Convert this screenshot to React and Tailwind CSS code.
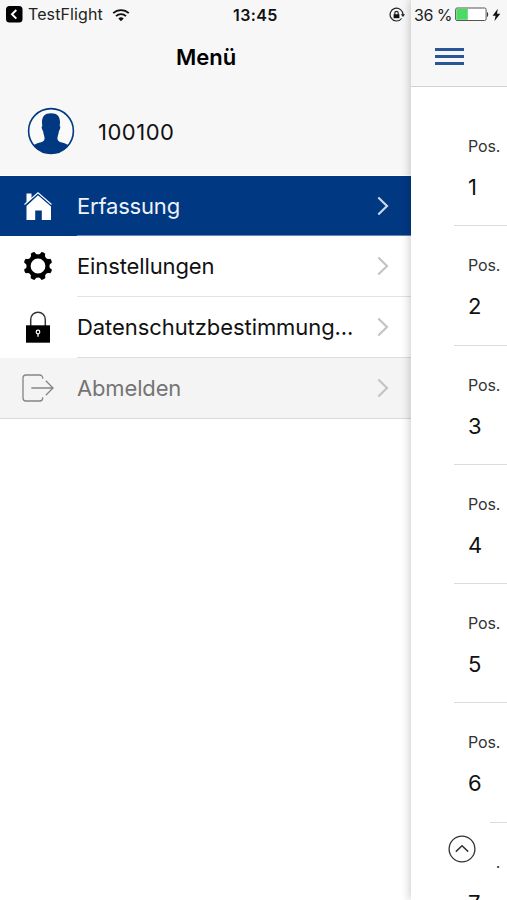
const MENU = [
  { id: "home", label: "Erfassung", Icon: HomeIcon, row: "h-[60px] bg-[#003882] text-[#eef2fa]", text: "pt-px tracking-[-0.2px]", chevron: "text-[#ccd6e6]", line: "border-[#6685b3]" },
  { id: "settings", label: "Einstellungen", Icon: GearIcon, row: "h-[61px] bg-white text-[#111]", text: "pt-px tracking-[-0.12px]", chevron: "text-[#c4c4c6]", line: "border-[#e2e2e2]" },
  { id: "privacy", label: "Datenschutzbestimmung...", Icon: LockIcon, row: "h-[61px] bg-white text-[#111]", text: "pt-px tracking-[-0.07px]", chevron: "text-[#c4c4c6]", line: "border-[#dcdcdc]" },
  { id: "logout", label: "Abmelden", Icon: LogoutIcon, row: "h-[61px] border-b border-[#d9d9d9] bg-[#f4f4f4] text-[#757575]", text: "pt-0.5 tracking-[-0.15px]", chevron: "text-[#c4c4c6]", line: "border-transparent" },
];

const POSITIONS = [1, 2, 3, 4, 5, 6, 7];

function HomeIcon() {
  return (
    <svg width="30" height="30" viewBox="0 0 30 30" fill="currentColor" className="text-white">
      <path d="M3.5 2.500h5v5L3.500 12z" />
      <path d="M15 4.200 28 15.500V29h-9.200v-9.500h-6.600V29H3.500V15z" />
      <path d="M2.200 14.300 15 3.300l12.800 11" fill="none" stroke="#003882" strokeWidth="1" />
      <path d="M1.500 13.500 15 1.800l13.500 11.700" fill="none" stroke="currentColor" strokeWidth="1.100" />
    </svg>
  );
}

function GearIcon() {
  const teeth = [22.5, 67.5, 112.5, 157.5, 202.5, 247.5, 292.5, 337.5];
  return (
    <svg width="30" height="30" viewBox="0 0 30 30" className="mb-px text-black">
      <circle cx="15" cy="15" r="9.400" fill="none" stroke="currentColor" strokeWidth="4" />
      {teeth.map((angle) => (
        <path key={angle} d="M10 5.500Q12.700 4 13 .8q2-.7 4 0Q17.300 4 20 5.500z" fill="currentColor" transform={`rotate(${angle} 15 15)`} />
      ))}
    </svg>
  );
}

function LockIcon() {
  return (
    <svg width="26" height="32" viewBox="0 0 26 32" className="mb-px text-black">
      <path d="M5.700 15V8.500a7.300 7.300 0 0 1 14.600 0V15" fill="none" stroke="#333" strokeWidth="1.500" />
      <path d="M1 14.300h24v17.400H1z" fill="currentColor" />
      <circle cx="13" cy="21" r="1.800" fill="none" stroke="#fff" strokeWidth="1.200" />
      <path d="M13 22.500v3.200" stroke="#fff" strokeWidth="1.300" />
    </svg>
  );
}

function LogoutIcon() {
  return (
    <svg width="32" height="28" viewBox="0 0 32 28" fill="none" stroke="#858585" strokeWidth="1.300">
      <path d="M20.700 4.800V4a3 3 0 0 0-3-3H4a3 3 0 0 0-3 3v20a3 3 0 0 0 3 3h13.700a3 3 0 0 0 3-3v-.8" />
      <path d="M9.300 14h21.500M23.800 6.800l7.200 7.200-7.200 7.200" />
    </svg>
  );
}

function AvatarIcon() {
  return (
    <svg width="48" height="48" viewBox="0 0 48 48">
      <clipPath id="avatar">
        <circle cx="24" cy="24" r="22.500" />
      </clipPath>
      <circle cx="24" cy="24" r="22.400" fill="#fafafa" stroke="#003882" strokeWidth="1.600" />
      <path
        clipPath="url(#avatar)"
        fill="#003882"
        d="M24 6.200c6.500 0 9.300 3.600 9 9.800l-.3 3c1 .4.800 2.800-.8 5.200-.4 3.200-1.400 5-1.500 7 .1 2.600 1.500 3.400 4.600 4.400 3.600 1.100 6.200 2 8.500 4.400v8h-39v-8c2.300-2.400 4.900-3.300 8.500-4.400 3.100-1 4.500-1.800 4.600-4.400-.1-2-1.100-3.800-1.500-7-1.600-2.400-1.800-4.800-.8-5.200l-.3-3c-.3-6.200 2.500-9.800 9-9.800z"
      />
    </svg>
  );
}

function Chevron({ className }) {
  return (
    <svg width="12" height="20" viewBox="0 0 12 20" fill="none" stroke="currentColor" strokeWidth="2.200" className={className}>
      <path d="m1.300 1.500 8.700 8.500-8.700 8.500" />
    </svg>
  );
}

function StatusLeft() {
  return (
    <div className="flex h-[29px] items-center pl-1.5 text-[#222]">
      <svg width="17" height="17" viewBox="0 0 17 17">
        <rect width="16.500" height="16.500" rx="3.500" fill="#000" />
        <path d="M10.300 4 6 8.300l4.300 4.300" fill="none" stroke="#fff" strokeWidth="2" />
      </svg>
      <span className="ml-[5px] w-[84px] pb-px whitespace-nowrap text-[16px] tracking-[0.1px]">TestFlight</span>
      <svg width="18" height="14" viewBox="0 0 18 14" fill="none" stroke="#111" strokeWidth="1.800">
        <path d="M1.200 5.200a11.200 11.200 0 0 1 15.600 0M4 8.200a7.200 7.200 0 0 1 10 0" />
        <path d="M6.300 10.600a4 4 0 0 1 5.400 0L9 13.300z" fill="#111" stroke="none" />
      </svg>
      <span className="ml-[103px] w-[46px] whitespace-nowrap text-[16px] font-semibold tracking-[0.4px] text-[#111]">13:45</span>
      <svg width="17" height="16" viewBox="0 0 17 16" className="ml-auto mr-[5px]" fill="none" stroke="#222" strokeWidth="1.200">
        <path d="M12.600 11.500A6.400 6.400 0 1 1 13.900 8" />
        <path d="M11.800 7.200h4.300L14 10z" fill="#222" stroke="none" />
        <path d="M4.600 7.200h5.800v4H4.600z" fill="#111" stroke="none" />
        <path d="M5.800 7.500V6a1.700 1.700 0 0 1 3.400 0v1.500" />
      </svg>
    </div>
  );
}

function StatusRight() {
  return (
    <div className="flex h-[29px] items-center pl-[3px] text-[#222]">
      <span className="w-[41px] whitespace-nowrap text-[16px] tracking-[-0.5px]">36 %</span>
      <svg width="34" height="15" viewBox="0 0 34 15">
        <rect x=".6" y="1" width="30.500" height="12.500" rx="1.500" fill="#fff" stroke="#555" strokeWidth="1" />
        <path d="M1.300 1.700h11.500v11.100H1.300z" fill="#4cd964" />
        <path d="M32 5c1.600.5 1.600 4.500 0 5z" fill="#333" />
      </svg>
      <svg width="9" height="14" viewBox="0 0 9 14" className="ml-[3px]">
        <path d="M5.800.8.6 7.800h3L2.500 13 8.300 5.800H5z" fill="#111" />
      </svg>
    </div>
  );
}

function SideMenu() {
  return (
    <aside className="flex w-[411px] shrink-0 flex-col bg-white">
      <header className="h-[176px] border-b border-white bg-[#f7f7f7]">
        <StatusLeft />
        <h1 className="flex h-[56px] items-center justify-center pl-px text-[22px] font-semibold text-black">Menü</h1>
        <div className="flex h-[91px] items-center pl-[27px]">
          <AvatarIcon />
          <span className="ml-[23px] pt-[3px] text-[22px] tracking-[0.5px] text-[#111]">100100</span>
        </div>
      </header>
      <nav>
        {MENU.map(({ id, label, Icon, row, text, chevron, line }) => (
          <a key={id} className={`flex ${row}`}>
            <span className="flex w-[77px] shrink-0 items-center justify-center pr-px">
              <Icon />
            </span>
            <span className={`flex flex-1 items-center justify-between border-b pr-[22px] ${line}`}>
              <span className={`whitespace-nowrap text-[22px] ${text}`}>{label}</span>
              <Chevron className={chevron} />
            </span>
          </a>
        ))}
      </nav>
    </aside>
  );
}

export default function App() {
  return (
    <div className="relative flex h-[900px] w-[507px] overflow-hidden bg-white font-['Inter',sans-serif]">
      <SideMenu />
      <main className="z-10 flex w-24 flex-col bg-white shadow-[-2px_0_8px_rgba(0,0,0,0.18)]">
        <header className="h-[87px] shrink-0 border-b border-[#d2d2d2] bg-[#f7f7f7]">
          <StatusRight />
          <div className="mt-[19px] ml-6 flex w-[29px] flex-col gap-1">
            <span className="h-[3px] bg-[#2a5596]" />
            <span className="h-[3px] bg-[#2a5596]" />
            <span className="h-[3px] bg-[#2a5596]" />
          </div>
        </header>
        <ul className="mt-5 pl-[43px]">
          {POSITIONS.map((pos) => (
            <li key={pos} className="h-[119.300px] border-b border-[#dcdcdc] pt-[29px] pl-[14px]">
              <div className="text-[16px] leading-5 tracking-[-0.1px] text-[#333]">Pos.</div>
              <div className="mt-[17px] text-[22px] leading-7 text-[#111]">{pos}</div>
            </li>
          ))}
        </ul>
      </main>
      <button type="button" className="absolute top-[821px] left-[435px] z-20 flex h-[55px] w-[55px] items-center justify-center bg-white pr-[2px] after:absolute after:top-3 after:left-full after:h-10 after:w-[6px] after:bg-white">
        <svg width="28" height="28" viewBox="0 0 28 28" fill="none" stroke="#333" strokeWidth="1.300">
          <circle cx="14" cy="14" r="12.900" />
          <path d="m7.800 16.600 6.200-5.800 6.200 5.800" strokeWidth="1.500" />
        </svg>
      </button>
    </div>
  );
}
